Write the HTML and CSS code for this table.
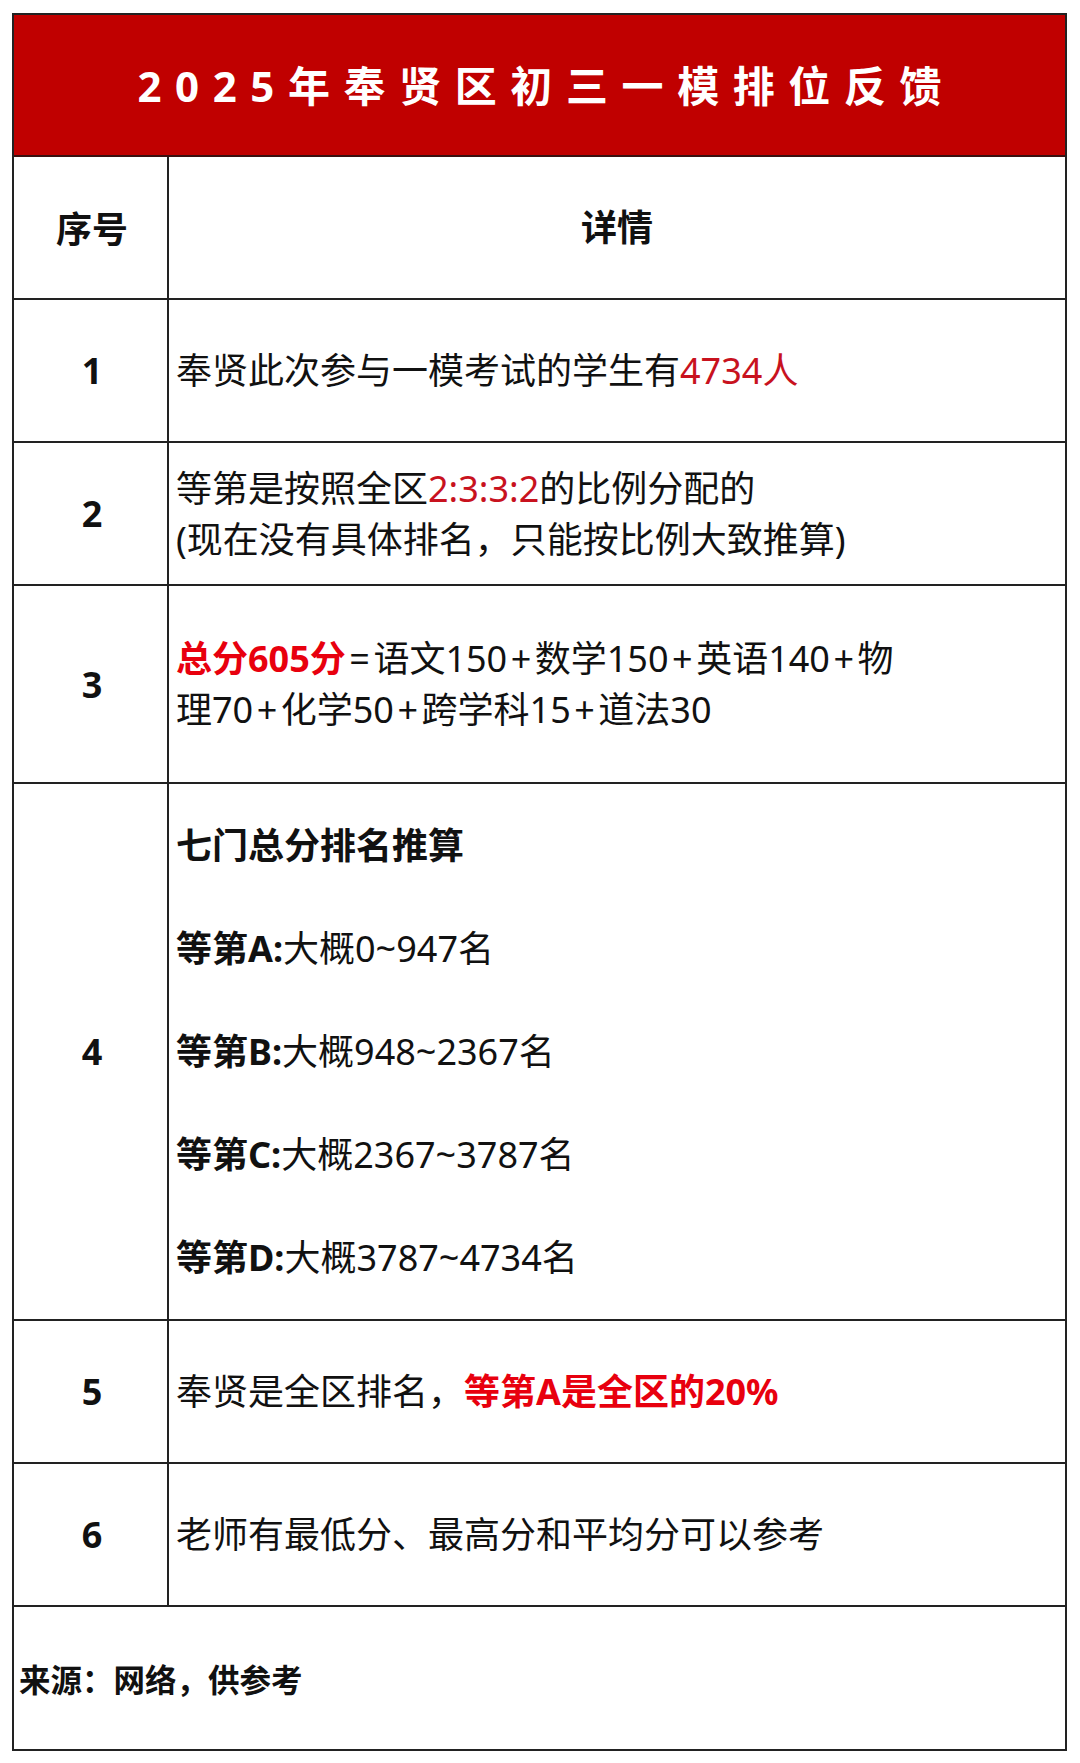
FILE: index.html
```html
<!DOCTYPE html>
<html lang="zh-CN">
<head>
<meta charset="utf-8">
<title>2025年奉贤区初三一模排位反馈</title>
<link rel="stylesheet" href="styles.css">
</head>
<body>
<div class="sheet">
  <div class="title">2025年奉贤区初三一模排位反馈</div>

  <div class="row row-std head">
    <div class="idx">序号</div>
    <div class="detail center">详情</div>
  </div>

  <div class="row row-std">
    <div class="idx">1</div>
    <div class="detail"><p>奉贤此次参与一模考试的学生有<span class="red">4734人</span></p></div>
  </div>

  <div class="row row-std">
    <div class="idx">2</div>
    <div class="detail"><p>等第是按照全区<span class="red">2:3:3:2</span>的比例分配的<br>(现在没有具体排名，只能按比例大致推算)</p></div>
  </div>

  <div class="row row-3">
    <div class="idx">3</div>
    <div class="detail"><p><b class="hot">总分605分</b><span class="op">=</span>语文150<span class="op">+</span>数学150<span class="op">+</span>英语140<span class="op">+</span>物<br>理70<span class="op">+</span>化学50<span class="op">+</span>跨学科15<span class="op">+</span>道法30</p></div>
  </div>

  <div class="row row-4">
    <div class="idx">4</div>
    <div class="detail">
      <div class="list">
        <p><b>七门总分排名推算</b></p>
        <p><b>等第A:</b>大概0~947名</p>
        <p><b>等第B:</b>大概948~2367名</p>
        <p><b>等第C:</b>大概2367~3787名</p>
        <p><b>等第D:</b>大概3787~4734名</p>
      </div>
    </div>
  </div>

  <div class="row row-std">
    <div class="idx">5</div>
    <div class="detail"><p>奉贤是全区排名，<b class="hot">等第A是全区的20%</b></p></div>
  </div>

  <div class="row row-std">
    <div class="idx">6</div>
    <div class="detail"><p>老师有最低分、最高分和平均分可以参考</p></div>
  </div>

  <div class="footer">来源：网络，供参考</div>
</div>
</body>
</html>
```

FILE: styles.css
```css
* { box-sizing: border-box; }

html, body {
  margin: 0;
  padding: 0;
  background: #ffffff;
}

body {
  font-family: "Noto Sans", "Noto Sans CJK SC", sans-serif;
  color: #111111;
}

p { margin: 0; }

.sheet {
  width: 1055px;
  margin: 13px 0 0 12px;
  border: 2px solid #222222;
  border-bottom: none;
}

.title {
  height: 142px;
  background: #c00000;
  border-bottom: 2px solid #3a1010;
  color: #ffffff;
  font-weight: 700;
  font-size: 42px;
  letter-spacing: 13.6px;
  padding-left: 13.6px;
  padding-bottom: 4px;
  display: flex;
  align-items: center;
  justify-content: center;
}

.row {
  display: grid;
  grid-template-columns: 155px 1fr;
  border-bottom: 2px solid #222222;
}

.row-std { height: 143px; }
.head { height: 143px; }
.row-3 { height: 198px; }
.row-4 { height: 537px; }

.idx {
  border-right: 2px solid #222222;
  display: flex;
  align-items: center;
  justify-content: center;
  padding-left: 3px;
  font-weight: 700;
  font-size: 36px;
  color: #111111;
}

.detail {
  display: flex;
  align-items: center;
  padding-left: 7px;
  font-size: 36px;
  line-height: 51px;
}

.detail.center {
  justify-content: center;
  padding-left: 0;
  font-weight: 700;
}

.red { color: #c8121e; }

.hot {
  color: #e8000e;
  font-weight: 700;
}

.op {
  margin: 0 3.5px;
}

.list {
  display: flex;
  flex-direction: column;
  gap: 52px;
}

.list b { font-weight: 700; }

.footer {
  height: 144px;
  border-bottom: 2px solid #222222;
  display: flex;
  align-items: center;
  padding-left: 5px;
  font-size: 31.5px;
  font-weight: 700;
  color: #111111;
}
```
